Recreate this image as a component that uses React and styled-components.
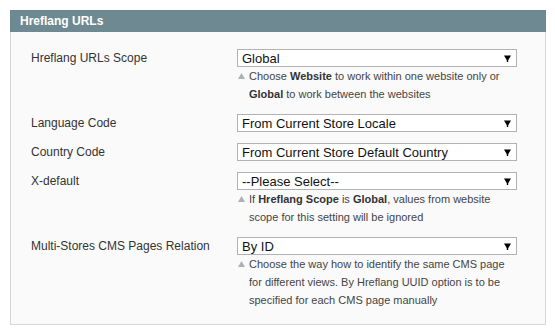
import styled, { createGlobalStyle } from 'styled-components'

const GlobalStyle = createGlobalStyle`
    html, body {
        margin: 0;
        padding: 0;
        background: #fff;
    }
    body {
        font-family: 'Liberation Sans', Arial, sans-serif;
    }
`

const Page = styled.div`
    padding: 10px 9px 8px 10px;
`
const Section = styled.div`
    width: 536px;
`
const Header = styled.div`
    height: 22px;
    background-color: #6f8992;
    color: #fff;
    font-size: 12px;
    font-weight: 700;
    line-height: 22px;
    padding-left: 10px;
    box-sizing: border-box;
`
const Body = styled.div`
    background-color: #fafafa;
    border: 1px solid #d6d6d6;
    border-top: none;
    padding: 17px 0 15px 20px;
`
const Row = styled.div`
    display: grid;
    grid-template-columns: 206px 280px;
    margin-bottom: ${(p) => (p.$last ? '0' : '11px')};
`
const Label = styled.div`
    font-size: 12px;
    color: #333;
    line-height: 18px;
`
const Field = styled.div`
    display: flex;
    flex-direction: column;
`
const Select = styled.div`
    height: 18px;
    box-sizing: border-box;
    border: 1px solid #b2b2b2;
    background: #fff;
    display: flex;
    align-items: center;
    justify-content: space-between;
    padding: 0 5px 0 4px;
    font-size: 13px;
    color: #111;
`
const Note = styled.div`
    display: flex;
    font-size: 11px;
    color: #444;
    line-height: 18px;

    b {
        color: #333;
    }
`
const NoteIcon = styled.span`
    flex: none;
    width: 12px;
    height: 18px;
    display: flex;
    align-items: center;
    padding-left: 1px;
    box-sizing: border-box;
`
const NoteText = styled.div`
    width: 260px;
`

const Dropdown = ({ value }) => (
    <Select>
        <span>{value}</span>
        <svg width='7' height='7' viewBox='0 0 7 7'>
            <path d='M0 0.5h7L4.2 5.2V7H2.8V5.2Z' fill='#000' />
        </svg>
    </Select>
)

const Hint = ({ children }) => (
    <Note>
        <NoteIcon>
            <svg width='7' height='6' viewBox='0 0 7 6'>
                <path d='M3.5 0L7 6H0Z' fill='#a9b3b6' />
            </svg>
        </NoteIcon>
        <NoteText>{children}</NoteText>
    </Note>
)

export default function App() {
    return (
        <>
            <GlobalStyle />
            <Page>
                <Section>
                    <Header>Hreflang URLs</Header>
                    <Body>
                        <Row>
                            <Label>Hreflang URLs Scope</Label>
                            <Field>
                                <Dropdown value='Global' />
                                <Hint>
                                    Choose <b>Website</b> to work within one website only or{' '}
                                    <b>Global</b> to work between the websites
                                </Hint>
                            </Field>
                        </Row>
                        <Row>
                            <Label>Language Code</Label>
                            <Field>
                                <Dropdown value='From Current Store Locale' />
                            </Field>
                        </Row>
                        <Row>
                            <Label>Country Code</Label>
                            <Field>
                                <Dropdown value='From Current Store Default Country' />
                            </Field>
                        </Row>
                        <Row>
                            <Label>X-default</Label>
                            <Field>
                                <Dropdown value='--Please Select--' />
                                <Hint>
                                    If <b>Hreflang Scope</b> is <b>Global</b>, values from website
                                    scope for this setting will be ignored
                                </Hint>
                            </Field>
                        </Row>
                        <Row $last>
                            <Label>Multi-Stores CMS Pages Relation</Label>
                            <Field>
                                <Dropdown value='By ID' />
                                <Hint>
                                    Choose the way how to identify the same CMS page for different
                                    views. By Hreflang UUID option is to be specified for each CMS
                                    page manually
                                </Hint>
                            </Field>
                        </Row>
                    </Body>
                </Section>
            </Page>
        </>
    )
}
